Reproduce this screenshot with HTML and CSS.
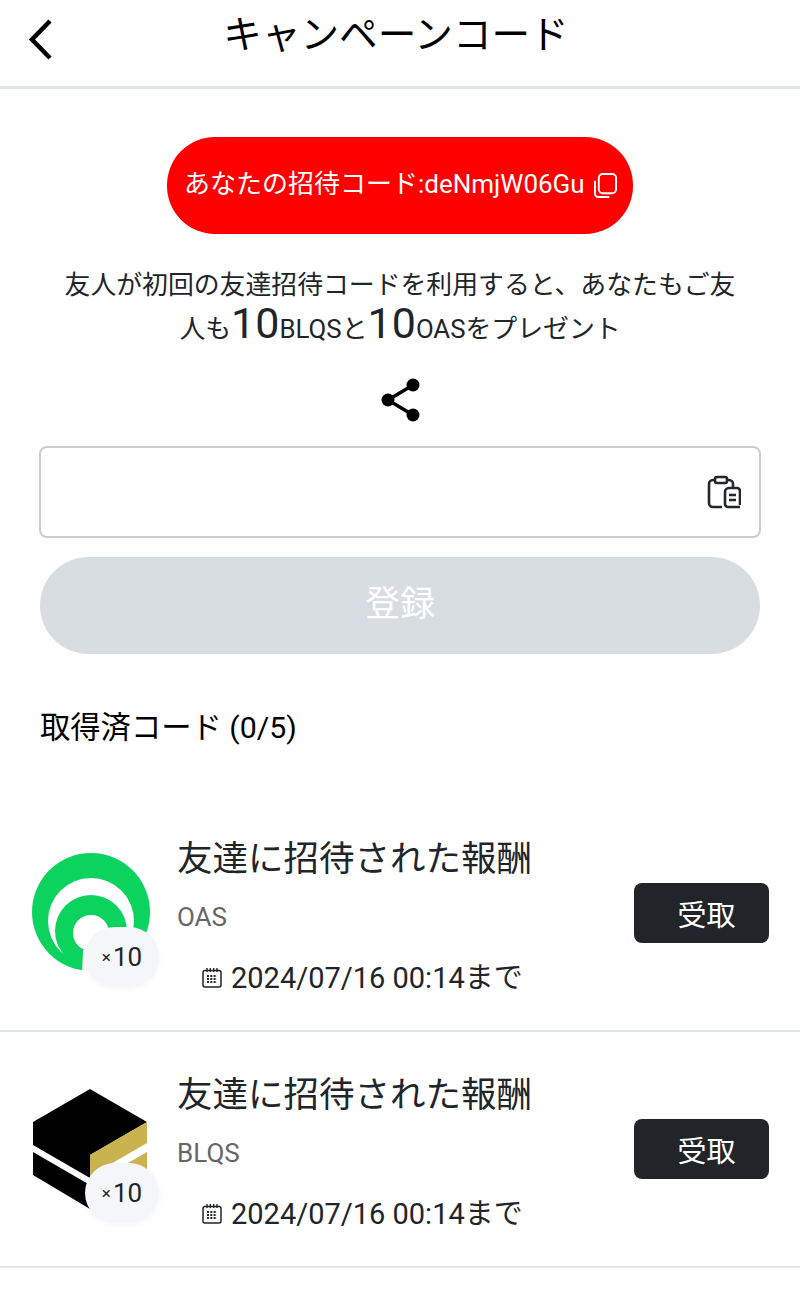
FILE: index.html
```html
<!DOCTYPE html>
<html lang="ja">
<head>
<meta charset="utf-8">
<title>キャンペーンコード</title>
<link rel="stylesheet" href="styles.css">
</head>
<body>
<header class="topbar">
  <svg class="back" viewBox="0 0 30 44" width="30" height="44"><path d="M24 4 6 22.500 24 41" fill="none" stroke="#000" stroke-width="4.500"/></svg>
  <h1 class="title">キャンペーンコード</h1>
  <span class="topbar-end"></span>
</header>
<main class="content">
  <div class="pill">
    <span class="code">あなたの招待コード:deNmjW06Gu</span>
    <svg class="copy" viewBox="0 0 24 26" width="23" height="25"><rect x="5" y="1" width="18" height="20" rx="4" fill="none" stroke="#fff" stroke-width="2"/><path d="M1 8v13.500a3.500 3.500 0 0 0 3.500 3.500H16" fill="none" stroke="#fff" stroke-width="2"/></svg>
  </div>
  <p class="intro">友人が初回の友達招待コードを利用すると、あなたもご友<br>人も<span class="big">10</span><span class="unit">BLQS</span>と<span class="big">10</span><span class="unit">OAS</span>をプレゼント</p>
  <svg class="share" viewBox="0 0 40 44" width="40" height="44"><path d="M33 7 8 22l25 15" fill="none" stroke="#000" stroke-width="3.500"/><circle cx="33" cy="7" r="6.500"/><circle cx="8" cy="22" r="6.500"/><circle cx="33" cy="37" r="6.500"/></svg>
  <div class="field">
    <svg viewBox="0 0 34 34" width="34" height="34" fill="none" stroke="#23272b" stroke-width="2.600"><path d="M8 5H6a4 4 0 0 0-4 4v19a4 4 0 0 0 4 4h9"/><path d="M20 5h2a4 4 0 0 1 4 4v3"/><rect x="8" y="2" width="12" height="6" rx="2"/><path d="M33 30v-14a3 3 0 0 0-3-3h-8a4 4 0 0 0-4 4v12a3 3 0 0 0 3 3h12"/><path d="M22 20h7M22 25h7"/></svg>
  </div>
  <button class="register">登録</button>
  <h2 class="acquired">取得済コード (0/5)</h2>
  <ul class="rewards">
    <li class="reward">
      <div class="thumb">
        <svg viewBox="32 853 118 122" width="118" height="122"><circle cx="91" cy="912" r="59" fill="#0bd35d"/><circle cx="91" cy="921" r="43" fill="#fff"/><circle cx="91" cy="931" r="36" fill="#0bd35d"/><circle cx="91" cy="933" r="18" fill="#fff"/><path d="M83 950h67v25H82z" fill="#fff"/></svg>
        <span class="badge"><small>×</small>10</span>
      </div>
      <div class="info">
        <div class="name">友達に招待された報酬</div>
        <div class="token">OAS</div>
        <div class="expiry"><svg class="cal" viewBox="0 0 20 20" width="20" height="20"><rect x="1" y="2.500" width="18" height="16.500" rx="2" fill="none" stroke="#212529" stroke-width="1.500"/><path d="M5 0v4M8.300 0v4M11.700 0v4M15 0v4" stroke="#212529" stroke-width="1.400"/><path d="M5 8h10M5 11h10M5 14h10" stroke="#212529" stroke-width="1.800" stroke-dasharray="2 1.300"/></svg>2024/07/16 00:14まで</div>
      </div>
      <button class="claim">受取</button>
    </li>
    <li class="reward">
      <div class="thumb">
        <svg viewBox="32 1089 118 122" width="118" height="122"><path d="M90 1089l57 33-57 33v23l-57-33v-23z"/><path d="M33 1152l57 33v24l-57-34z"/><path d="M147 1122v21l-57 33v-21z" fill="#cab24f"/><path d="M147 1152v23l-57 33v-23z" fill="#cab24f"/></svg>
        <span class="badge"><small>×</small>10</span>
      </div>
      <div class="info">
        <div class="name">友達に招待された報酬</div>
        <div class="token">BLQS</div>
        <div class="expiry"><svg class="cal" viewBox="0 0 20 20" width="20" height="20"><rect x="1" y="2.500" width="18" height="16.500" rx="2" fill="none" stroke="#212529" stroke-width="1.500"/><path d="M5 0v4M8.300 0v4M11.700 0v4M15 0v4" stroke="#212529" stroke-width="1.400"/><path d="M5 8h10M5 11h10M5 14h10" stroke="#212529" stroke-width="1.800" stroke-dasharray="2 1.300"/></svg>2024/07/16 00:14まで</div>
      </div>
      <button class="claim">受取</button>
    </li>
  </ul>
</main>
</body>
</html>
```
FILE: styles.css
```css
* { box-sizing: border-box; }
html, body { margin: 0; padding: 0; }
body {
  width: 800px;
  background: #fff;
  color: #000;
  font-family: Roboto, "Noto Sans CJK JP", sans-serif;
}
.topbar {
  height: 89px;
  display: flex;
  align-items: flex-start;
  justify-content: space-between;
  padding: 17px 0 0 26px;
  border-bottom: 3px solid #dfe3e6;
}
.back { display: block; }
.title {
  margin: 0;
  font-size: 38.600px;
  line-height: 36px;
  font-weight: 400;
  letter-spacing: 0;
}
.topbar-end { width: 64px; }
.content {
  display: flex;
  flex-direction: column;
  align-items: center;
  padding-top: 48px;
}
.pill {
  width: 466px;
  height: 97px;
  border-radius: 48px;
  background: #f00;
  color: #fff;
  font-size: 26px;
  display: flex;
  align-items: center;
  padding-left: 17px;
  gap: 9px;
}
.code { margin-bottom: 9px; }
.copy { flex: none; }
.intro {
  margin: 29px 0 0;
  width: 700px;
  text-align: center;
  font-size: 25.850px;
  line-height: 44px;
  color: #212529;
}
.big { font-size: 43px; line-height: 0; }
.unit { font-size: 25.800px; }
.share { display: block; margin-top: 27px; }
.field {
  width: 722px;
  height: 92px;
  margin-top: 24px;
  border: 2px solid #ccc;
  border-radius: 8px;
  display: flex;
  align-items: center;
  justify-content: flex-end;
  padding-right: 18px;
}
.register {
  width: 720px;
  height: 97px;
  margin-top: 19px;
  border: 0;
  border-radius: 49px;
  background: #d8dde1;
  color: #fff;
  font: inherit;
  font-size: 35px;
  padding: 0 0 10px;
}
.acquired {
  align-self: flex-start;
  margin: 54px 0 0 40px;
  font-size: 30.300px;
  line-height: 40px;
  font-weight: 400;
}
.rewards {
  list-style: none;
  margin: 48px 0 0;
  padding: 0;
  width: 100%;
}
.reward {
  height: 236px;
  border-bottom: 2px solid #e4e7e9;
  display: flex;
  align-items: center;
  padding: 0 31px 0 32px;
}
.thumb { position: relative; width: 118px; height: 122px; margin-top: 2px; flex: none; }
.thumb svg { display: block; }
.badge {
  position: absolute;
  left: 53px;
  top: 74px;
  width: 74px;
  height: 60px;
  border-radius: 30px;
  background: #f5f6f8;
  box-shadow: 0 2px 6px rgba(0, 0, 0, .04);
  color: #212529;
  font-size: 26px;
  display: flex;
  align-items: center;
  justify-content: center;
}
.badge small { font-size: 17px; margin-right: 2px; }
.info { flex: 1; margin: 5px 0 0 27px; color: #212529; }
.name { font-size: 35.500px; line-height: 46px; }
.token { font-size: 26px; line-height: 30px; margin-top: 20px; color: #666; }
.expiry {
  font-size: 29px;
  line-height: 36px;
  margin-top: 28px;
  margin-left: 25px;
  display: flex;
  align-items: center;
  gap: 9px;
}
.cal { flex: none; }
.claim {
  width: 135px;
  height: 60px;
  border: 0;
  border-radius: 8px;
  background: #212529;
  color: #fff;
  font: inherit;
  font-size: 29px;
  padding: 0 0 0 10px;
}
```
